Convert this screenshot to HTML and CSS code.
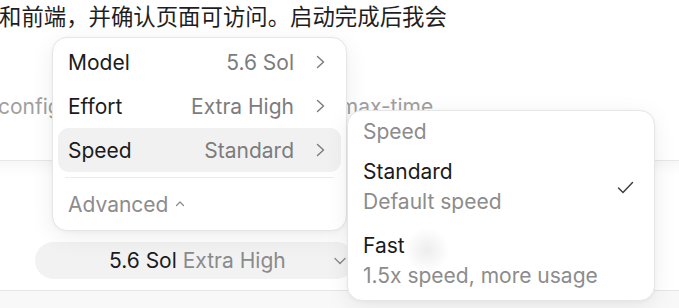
FILE: index.html
```html
<!DOCTYPE html>
<html lang="zh">
<head>
<meta charset="utf-8">
<title>Model menu</title>
<link rel="stylesheet" href="styles.css">
</head>
<body>
<div class="page">
  <p class="chat-line">和前端，并确认页面可访问。启动完成后我会</p>
  <div class="cmd-line"><span class="cmd-a">config</span><span class="cmd-b">max-time</span></div>
  <div class="composer">
    <div class="pill">
      <span class="pill-text"><span class="pill-model">5.6 Sol</span> <span class="pill-effort">Extra High</span></span>
      <svg class="pill-chev" width="12" height="8" viewBox="0 0 12 8"><path d="M1 1.5 L6 6.5 L11 1.5" fill="none" stroke="#8a8a8a" stroke-width="1.4" stroke-linecap="round" stroke-linejoin="round"/></svg>
    </div>
  </div>
  <div class="footer"></div>

  <div class="menu main-menu">
    <div class="row">
      <span class="row-label">Model</span>
      <span class="row-value">5.6 Sol</span>
      <svg class="chev" width="9" height="14" viewBox="0 0 9 14"><path d="M1.5 1.5 L7.5 7 L1.5 12.5" fill="none" stroke="#7a7a7a" stroke-width="1.4" stroke-linecap="round" stroke-linejoin="round"/></svg>
    </div>
    <div class="row">
      <span class="row-label">Effort</span>
      <span class="row-value">Extra High</span>
      <svg class="chev" width="9" height="14" viewBox="0 0 9 14"><path d="M1.5 1.5 L7.5 7 L1.5 12.5" fill="none" stroke="#7a7a7a" stroke-width="1.4" stroke-linecap="round" stroke-linejoin="round"/></svg>
    </div>
    <div class="row active">
      <span class="row-label">Speed</span>
      <span class="row-value">Standard</span>
      <svg class="chev" width="9" height="14" viewBox="0 0 9 14"><path d="M1.5 1.5 L7.5 7 L1.5 12.5" fill="none" stroke="#7a7a7a" stroke-width="1.4" stroke-linecap="round" stroke-linejoin="round"/></svg>
    </div>
    <div class="divider"></div>
    <div class="advanced">Advanced
      <svg class="caret" width="10" height="7" viewBox="0 0 10 7"><path d="M1.5 5.5 L5 2 L8.5 5.5" fill="none" stroke="#8c8c8c" stroke-width="1.3" stroke-linecap="round" stroke-linejoin="round"/></svg>
    </div>
  </div>

  <div class="menu sub-menu">
    <div class="sub-head">Speed</div>
    <div class="opt">
      <div class="opt-text">
        <div class="opt-title">Standard</div>
        <div class="opt-desc">Default speed</div>
      </div>
      <svg class="check" width="17" height="13" viewBox="0 0 17 13"><path d="M1.5 7 L6 11.5 L15.5 1.5" fill="none" stroke="#3a3a3a" stroke-width="1.4" stroke-linecap="round" stroke-linejoin="round"/></svg>
    </div>
    <div class="opt">
      <div class="opt-text">
        <div class="opt-title">Fast</div>
        <div class="opt-desc">1.5x speed, more usage</div>
      </div>
    </div>
    <div class="blob"></div>
  </div>
</div>
</body>
</html>
```

FILE: styles.css
```css
* { box-sizing: border-box; }
html, body { margin: 0; padding: 0; background: #ffffff; }
body {
  font-family: "Inter", "Noto Sans", "Noto Sans CJK SC", sans-serif;
  color: #1b1b1b;
  width: 679px;
  height: 308px;
  overflow: hidden;
}
.page { position: relative; width: 679px; height: 308px; overflow: hidden; }

.chat-line {
  margin: 0 0 0 -1px;
  padding: 1px 0 0 0;
  height: 29px;
  font-family: "Noto Sans CJK SC", sans-serif;
  font-size: 22.4px;
  line-height: 28px;
  color: #1e1e1e;
  white-space: nowrap;
}

.cmd-line {
  margin-top: 66px;
  height: 24px;
  display: flex;
  font-size: 21px;
  line-height: 24px;
  color: #a0a0a0;
  white-space: nowrap;
}
.cmd-a { margin-left: -2px; }
.cmd-b {
  margin-left: 279px;
  width: 94px;
  overflow: hidden;
}

.composer {
  margin-top: 41px;
  height: 131px;
  border-top: 1px solid #e8e8e8;
  border-bottom: 1px solid #e6e6e6;
  background: linear-gradient(#f7f7f7, #ffffff 14px);
  padding: 81px 0 0 35px;
}
.pill {
  width: 320px;
  height: 37px;
  border-radius: 19px;
  background: #f2f2f2;
  display: flex;
  align-items: center;
  font-size: 21px;
  padding-left: 74px;
}
.pill-model { color: #1b1b1b; }
.pill-effort { color: #8a8a8a; }
.pill-chev { margin-left: 48px; }

.footer { height: 20px; background: #f8f8f8; }

.menu {
  position: absolute;
  background: #ffffff;
  border: 1px solid #e6e6e6;
  border-radius: 15px;
  box-shadow: 0 6px 24px rgba(0,0,0,0.07), 0 1px 4px rgba(0,0,0,0.04);
}

.main-menu {
  left: 52px;
  top: 37px;
  width: 295px;
  height: 194px;
  padding: 2px 5px 0 5px;
}
.row {
  height: 44px;
  display: flex;
  align-items: center;
  padding: 0 16px 0 10px;
  border-radius: 11px;
  font-size: 21px;
}
.row.active { background: #f1f1f1; }
.row-label { flex: 1; color: #1b1b1b; }
.row-value { color: #7c7c7c; margin-right: 22px; }
.chev { display: block; }

.divider {
  height: 1px;
  background: #ececec;
  margin: 5px 7px 0 7px;
}
.advanced {
  display: flex;
  align-items: center;
  gap: 7px;
  padding: 14px 0 0 10px;
  font-size: 21px;
  color: #8c8c8c;
}
.caret { margin-top: -3px; }

.sub-menu {
  left: 347px;
  top: 110px;
  width: 308px;
  height: 191px;
  padding: 7px 20px 0 15px;
}
.sub-head {
  font-size: 21px;
  line-height: 28px;
  color: #8c8c8c;
}
.opt {
  display: flex;
  align-items: center;
  margin-top: 11px;
}
.opt + .opt { margin-top: 14px; }
.opt-text { flex: 1; }
.opt-title { font-size: 21px; line-height: 30px; color: #1b1b1b; }
.opt-desc { font-size: 21px; line-height: 30px; color: #8c8c8c; }

.blob {
  position: absolute;
  left: 56px;
  top: 116px;
  width: 46px;
  height: 46px;
  border-radius: 50%;
  background: radial-gradient(circle, rgba(0,0,0,0.07), rgba(0,0,0,0) 70%);
}
```
